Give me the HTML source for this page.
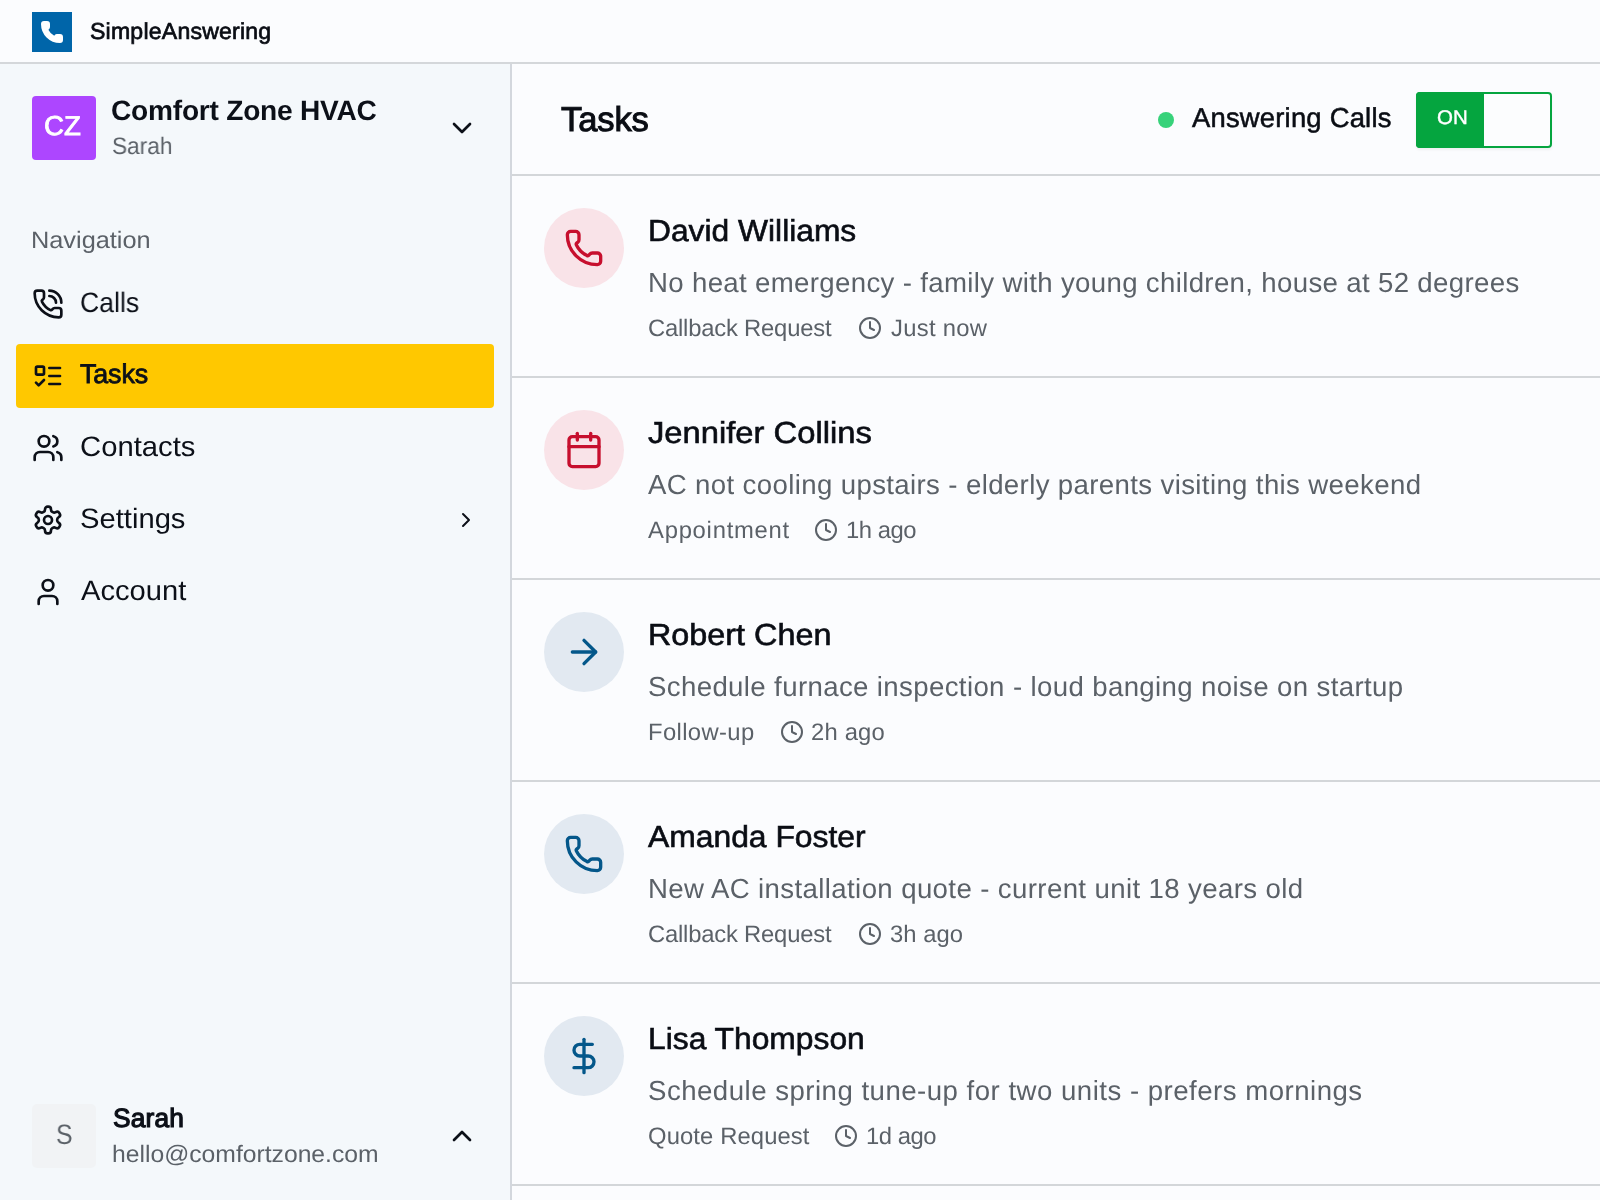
<!DOCTYPE html>
<html lang="en"><head><meta charset="utf-8"><title>Tasks - SimpleAnswering</title>
<style>
*{box-sizing:border-box;margin:0;padding:0}
html,body{width:1600px;height:1200px;overflow:hidden;background:#fbfcfe;font-family:"Liberation Sans",sans-serif;}
body{position:relative}
.t{position:absolute;white-space:nowrap;display:block;will-change:transform;text-rendering:geometricPrecision}
.i{position:absolute;display:block;overflow:visible}
.b{position:absolute;display:block}
</style></head><body>

<div class="b" id="topbar" style="left:0;top:0;width:1600px;height:64px;background:#fbfcfe;border-bottom:2px solid #d4d7da"></div>
<div class="b" id="sidebar" style="left:0;top:64px;width:512px;height:1136px;background:#f4f8fb;border-right:2px solid #d3d7dd"></div>
<div class="b" id="mainhdr" style="left:512px;top:64px;width:1088px;height:112px;background:#fbfcfe;border-bottom:2px solid #d3d6d9"></div>
<div class="b" style="left:512px;top:376px;width:1088px;height:2px;background:#d3d6d9"></div>
<div class="b" style="left:512px;top:578px;width:1088px;height:2px;background:#d3d6d9"></div>
<div class="b" style="left:512px;top:780px;width:1088px;height:2px;background:#d3d6d9"></div>
<div class="b" style="left:512px;top:982px;width:1088px;height:2px;background:#d3d6d9"></div>
<div class="b" style="left:512px;top:1184px;width:1088px;height:2px;background:#d3d6d9"></div>
<div class="b" style="left:32px;top:12px;width:40px;height:40px;background:#0065a9"></div>
<svg class="i" style="left:40px;top:20px" width="24" height="24" viewBox="0 0 24 24" stroke="#ffffff" stroke-width="2" stroke-linecap="round" stroke-linejoin="round" fill="#ffffff"><path d="M13.832 16.568a1 1 0 0 0 1.213-.303l.355-.465A2 2 0 0 1 17 15h3a2 2 0 0 1 2 2v3a2 2 0 0 1-2 2A18 18 0 0 1 2 4a2 2 0 0 1 2-2h3a2 2 0 0 1 2 2v3a2 2 0 0 1-.8 1.6l-.468.351a1 1 0 0 0-.292 1.233 14 14 0 0 0 6.392 6.384"/></svg>
<div class="b" style="left:32px;top:96px;width:64px;height:64px;background:#ad46ff;border-radius:4px"></div>
<svg class="i" style="left:446px;top:112px" width="32" height="32" viewBox="0 0 24 24" fill="none" stroke="#0c1018" stroke-width="2" stroke-linecap="round" stroke-linejoin="round" ><path d="m6 9 6 6 6-6"/></svg>
<div class="b" style="left:16px;top:344px;width:478px;height:64px;background:#ffc800;border-radius:4px"></div>
<svg class="i" style="left:32px;top:288px" width="32" height="32" viewBox="0 0 24 24" fill="none" stroke="#0c1018" stroke-width="2" stroke-linecap="round" stroke-linejoin="round" ><path d="M13 2a9 9 0 0 1 9 9"/><path d="M13 6a5 5 0 0 1 5 5"/><path d="M13.832 16.568a1 1 0 0 0 1.213-.303l.355-.465A2 2 0 0 1 17 15h3a2 2 0 0 1 2 2v3a2 2 0 0 1-2 2A18 18 0 0 1 2 4a2 2 0 0 1 2-2h3a2 2 0 0 1 2 2v3a2 2 0 0 1-.8 1.6l-.468.351a1 1 0 0 0-.292 1.233 14 14 0 0 0 6.392 6.384"/></svg>
<svg class="i" style="left:32px;top:360px" width="32" height="32" viewBox="0 0 24 24" fill="none" stroke="#0c1018" stroke-width="2" stroke-linecap="round" stroke-linejoin="round" ><rect x="3" y="5" width="6" height="6" rx="1"/><path d="m3 17 2 2 4-4"/><path d="M13 6h8"/><path d="M13 12h8"/><path d="M13 18h8"/></svg>
<svg class="i" style="left:32px;top:432px" width="32" height="32" viewBox="0 0 24 24" fill="none" stroke="#0c1018" stroke-width="2" stroke-linecap="round" stroke-linejoin="round" ><path d="M16 21v-2a4 4 0 0 0-4-4H6a4 4 0 0 0-4 4v2"/><circle cx="9" cy="7" r="4"/><path d="M22 21v-2a4 4 0 0 0-3-3.87"/><path d="M16 3.13a4 4 0 0 1 0 7.75"/></svg>
<svg class="i" style="left:32px;top:504px" width="32" height="32" viewBox="0 0 24 24" fill="none" stroke="#0c1018" stroke-width="2" stroke-linecap="round" stroke-linejoin="round" ><path d="M12.22 2h-.44a2 2 0 0 0-2 2v.18a2 2 0 0 1-1 1.73l-.43.25a2 2 0 0 1-2 0l-.15-.08a2 2 0 0 0-2.73.73l-.22.38a2 2 0 0 0 .73 2.73l.15.1a2 2 0 0 1 1 1.72v.51a2 2 0 0 1-1 1.74l-.15.09a2 2 0 0 0-.73 2.73l.22.38a2 2 0 0 0 2.73.73l.15-.08a2 2 0 0 1 2 0l.43.25a2 2 0 0 1 1 1.73V20a2 2 0 0 0 2 2h.44a2 2 0 0 0 2-2v-.18a2 2 0 0 1 1-1.73l.43-.25a2 2 0 0 1 2 0l.15.08a2 2 0 0 0 2.73-.73l.22-.39a2 2 0 0 0-.73-2.73l-.15-.08a2 2 0 0 1-1-1.74v-.5a2 2 0 0 1 1-1.74l.15-.09a2 2 0 0 0 .73-2.73l-.22-.38a2 2 0 0 0-2.73-.73l-.15.08a2 2 0 0 1-2 0l-.43-.25a2 2 0 0 1-1-1.73V4a2 2 0 0 0-2-2z"/><circle cx="12" cy="12" r="3"/></svg>
<svg class="i" style="left:32px;top:576px" width="32" height="32" viewBox="0 0 24 24" fill="none" stroke="#0c1018" stroke-width="2" stroke-linecap="round" stroke-linejoin="round" ><path d="M19 21v-2a4 4 0 0 0-4-4H9a4 4 0 0 0-4 4v2"/><circle cx="12" cy="7" r="4"/></svg>
<svg class="i" style="left:454px;top:508px" width="24" height="24" viewBox="0 0 24 24" fill="none" stroke="#0c1018" stroke-width="2" stroke-linecap="round" stroke-linejoin="round" ><path d="m9 18 6-6-6-6"/></svg>
<div class="b" style="left:32px;top:1104px;width:64px;height:64px;background:#f1f3f5;border-radius:5px"></div>
<svg class="i" style="left:446px;top:1120px" width="32" height="32" viewBox="0 0 24 24" fill="none" stroke="#0c1018" stroke-width="2" stroke-linecap="round" stroke-linejoin="round" ><path d="m18 15-6-6-6 6"/></svg>
<div class="b" style="left:1158px;top:112px;width:16px;height:16px;border-radius:50%;background:#37d27a"></div>
<div class="b" style="left:1416px;top:92px;width:136px;height:56px;border:2px solid #05a53f;border-radius:4px;background:#fcfdfe;box-shadow:0 2px 3px rgba(0,0,0,0.05)"></div>
<div class="b" style="left:1416px;top:92px;width:68px;height:56px;background:#05a53f;border-radius:4px 0 0 4px"></div>
<div class="b" style="left:544px;top:208px;width:80px;height:80px;border-radius:50%;background:#f9e3e8"></div>
<svg class="i" style="left:564px;top:228px" width="40" height="40" viewBox="0 0 24 24" fill="none" stroke="#c70f2e" stroke-width="2" stroke-linecap="round" stroke-linejoin="round" ><path d="M13.832 16.568a1 1 0 0 0 1.213-.303l.355-.465A2 2 0 0 1 17 15h3a2 2 0 0 1 2 2v3a2 2 0 0 1-2 2A18 18 0 0 1 2 4a2 2 0 0 1 2-2h3a2 2 0 0 1 2 2v3a2 2 0 0 1-.8 1.6l-.468.351a1 1 0 0 0-.292 1.233 14 14 0 0 0 6.392 6.384"/></svg>
<div class="b" style="left:544px;top:410px;width:80px;height:80px;border-radius:50%;background:#f9e3e8"></div>
<svg class="i" style="left:564px;top:430px" width="40" height="40" viewBox="0 0 24 24" fill="none" stroke="#c70f2e" stroke-width="2" stroke-linecap="round" stroke-linejoin="round" ><path d="M8 2v4"/><path d="M16 2v4"/><rect width="18" height="18" x="3" y="4" rx="2"/><path d="M3 10h18"/></svg>
<div class="b" style="left:544px;top:612px;width:80px;height:80px;border-radius:50%;background:#e2e9f1"></div>
<svg class="i" style="left:564px;top:632px" width="40" height="40" viewBox="0 0 24 24" fill="none" stroke="#04578a" stroke-width="2" stroke-linecap="round" stroke-linejoin="round" ><path d="M5 12h14"/><path d="m12 5 7 7-7 7"/></svg>
<div class="b" style="left:544px;top:814px;width:80px;height:80px;border-radius:50%;background:#e2e9f1"></div>
<svg class="i" style="left:564px;top:834px" width="40" height="40" viewBox="0 0 24 24" fill="none" stroke="#04578a" stroke-width="2" stroke-linecap="round" stroke-linejoin="round" ><path d="M13.832 16.568a1 1 0 0 0 1.213-.303l.355-.465A2 2 0 0 1 17 15h3a2 2 0 0 1 2 2v3a2 2 0 0 1-2 2A18 18 0 0 1 2 4a2 2 0 0 1 2-2h3a2 2 0 0 1 2 2v3a2 2 0 0 1-.8 1.6l-.468.351a1 1 0 0 0-.292 1.233 14 14 0 0 0 6.392 6.384"/></svg>
<div class="b" style="left:544px;top:1016px;width:80px;height:80px;border-radius:50%;background:#e2e9f1"></div>
<svg class="i" style="left:564px;top:1036px" width="40" height="40" viewBox="0 0 24 24" fill="none" stroke="#04578a" stroke-width="2" stroke-linecap="round" stroke-linejoin="round" ><line x1="12" x2="12" y1="2" y2="22"/><path d="M17 5H9.5a3.5 3.5 0 0 0 0 7h5a3.5 3.5 0 0 1 0 7H6"/></svg>
<svg class="i" style="left:857.9px;top:316.2px" width="24" height="24" viewBox="0 0 24 24" fill="none" stroke="#5b6168" stroke-width="2" stroke-linecap="round" stroke-linejoin="round" ><circle cx="12" cy="12" r="10"/><polyline points="12 6 12 12 16 14"/></svg>
<svg class="i" style="left:814.1px;top:518.2px" width="24" height="24" viewBox="0 0 24 24" fill="none" stroke="#5b6168" stroke-width="2" stroke-linecap="round" stroke-linejoin="round" ><circle cx="12" cy="12" r="10"/><polyline points="12 6 12 12 16 14"/></svg>
<svg class="i" style="left:780.1px;top:720.2px" width="24" height="24" viewBox="0 0 24 24" fill="none" stroke="#5b6168" stroke-width="2" stroke-linecap="round" stroke-linejoin="round" ><circle cx="12" cy="12" r="10"/><polyline points="12 6 12 12 16 14"/></svg>
<svg class="i" style="left:857.9px;top:922.2px" width="24" height="24" viewBox="0 0 24 24" fill="none" stroke="#5b6168" stroke-width="2" stroke-linecap="round" stroke-linejoin="round" ><circle cx="12" cy="12" r="10"/><polyline points="12 6 12 12 16 14"/></svg>
<svg class="i" style="left:834.1px;top:1124.2px" width="24" height="24" viewBox="0 0 24 24" fill="none" stroke="#5b6168" stroke-width="2" stroke-linecap="round" stroke-linejoin="round" ><circle cx="12" cy="12" r="10"/><polyline points="12 6 12 12 16 14"/></svg>
<span class="t" id="brand" style="left:89.60px;top:20.45px;font-size:23.1px;line-height:23.1px;color:#0a0d14;letter-spacing:0.200px;-webkit-text-stroke:0.69px;">SimpleAnswering</span>
<span class="t" id="org" style="left:111.40px;top:97.21px;font-size:28.1px;line-height:28.1px;color:#0c1018;letter-spacing:-0.225px;font-weight:700;">Comfort Zone HVAC</span>
<span class="t" id="orgsub" style="left:112.00px;top:134.85px;font-size:23.8px;line-height:23.8px;color:#5b6168;letter-spacing:0.000px;transform:scaleX(0.9525);transform-origin:0 0;">Sarah</span>
<span class="t" id="cz" style="left:44.40px;top:111.98px;font-size:27.2px;line-height:27.2px;color:#ffffff;letter-spacing:0.000px;-webkit-text-stroke:0.82px;transform:scaleX(1.0175);transform-origin:0 0;">CZ</span>
<span class="t" id="navlbl" style="left:31.20px;top:228.85px;font-size:23.8px;line-height:23.8px;color:#5b6168;letter-spacing:0.000px;transform:scaleX(1.0642);transform-origin:0 0;">Navigation</span>
<span class="t" id="n1" style="left:80.30px;top:289.21px;font-size:28.1px;line-height:28.1px;color:#0c1018;letter-spacing:0.000px;transform:scaleX(0.9459);transform-origin:0 0;">Calls</span>
<span class="t" id="n2" style="left:79.90px;top:361.23px;font-size:26.9px;line-height:26.9px;color:#0c1018;letter-spacing:-0.150px;-webkit-text-stroke:0.81px;">Tasks</span>
<span class="t" id="n3" style="left:80.30px;top:433.21px;font-size:28.1px;line-height:28.1px;color:#0c1018;letter-spacing:0.000px;transform:scaleX(1.0413);transform-origin:0 0;">Contacts</span>
<span class="t" id="n4" style="left:80.30px;top:505.21px;font-size:28.1px;line-height:28.1px;color:#0c1018;letter-spacing:0.000px;transform:scaleX(1.0390);transform-origin:0 0;">Settings</span>
<span class="t" id="n5" style="left:80.50px;top:577.21px;font-size:28.1px;line-height:28.1px;color:#0c1018;letter-spacing:0.000px;transform:scaleX(1.0373);transform-origin:0 0;">Account</span>
<span class="t" id="uS" style="left:55.75px;top:1121.21px;font-size:28.1px;line-height:28.1px;color:#5b6168;letter-spacing:0.000px;transform:scaleX(0.885);transform-origin:0 0;">S</span>
<span class="t" id="uname" style="left:113.00px;top:1104.74px;font-size:26.3px;line-height:26.3px;color:#0c1018;letter-spacing:0.200px;-webkit-text-stroke:1.18px;">Sarah</span>
<span class="t" id="umail" style="left:112.20px;top:1142.85px;font-size:23.8px;line-height:23.8px;color:#5b6168;letter-spacing:0.000px;transform:scaleX(1.0376);transform-origin:0 0;">hello@comfortzone.com</span>
<span class="t" id="title" style="left:560.50px;top:102.80px;font-size:34.5px;line-height:34.5px;color:#0a0d14;letter-spacing:-0.100px;-webkit-text-stroke:1.03px;">Tasks</span>
<span class="t" id="ans" style="left:1192.10px;top:103.81px;font-size:27.4px;line-height:27.4px;color:#0a0d14;letter-spacing:0.214px;-webkit-text-stroke:0.55px;">Answering Calls</span>
<span class="t" id="on" style="left:1437.30px;top:109.32px;font-size:19.7px;line-height:19.7px;color:#ffffff;letter-spacing:0.000px;-webkit-text-stroke:0.39px;transform:scaleX(1.0396);transform-origin:0 0;">ON</span>
<span class="t" id="r0n" style="left:648.00px;top:216.27px;font-size:30.4px;line-height:30.4px;color:#0a0d14;letter-spacing:0.000px;-webkit-text-stroke:0.61px;transform:scaleX(1.0452);transform-origin:0 0;">David Williams</span>
<span class="t" id="r0d" style="left:648.00px;top:268.64px;font-size:27.6px;line-height:27.6px;color:#5b6168;letter-spacing:0.348px;">No heat emergency - family with young children, house at 52 degrees</span>
<span class="t" id="r0m" style="left:648.00px;top:316.85px;font-size:23.8px;line-height:23.8px;color:#5b6168;letter-spacing:-0.200px;">Callback Request</span>
<span class="t" id="r0a" style="left:891.00px;top:316.85px;font-size:23.8px;line-height:23.8px;color:#5b6168;letter-spacing:0.286px;">Just now</span>
<span class="t" id="r1n" style="left:648.00px;top:418.27px;font-size:30.4px;line-height:30.4px;color:#0a0d14;letter-spacing:0.000px;-webkit-text-stroke:0.61px;transform:scaleX(1.0773);transform-origin:0 0;">Jennifer Collins</span>
<span class="t" id="r1d" style="left:648.00px;top:470.64px;font-size:27.6px;line-height:27.6px;color:#5b6168;letter-spacing:0.371px;">AC not cooling upstairs - elderly parents visiting this weekend</span>
<span class="t" id="r1m" style="left:648.00px;top:518.85px;font-size:23.8px;line-height:23.8px;color:#5b6168;letter-spacing:0.760px;">Appointment</span>
<span class="t" id="r1a" style="left:846.00px;top:518.85px;font-size:23.8px;line-height:23.8px;color:#5b6168;letter-spacing:-0.480px;">1h ago</span>
<span class="t" id="r2n" style="left:648.00px;top:620.27px;font-size:30.4px;line-height:30.4px;color:#0a0d14;letter-spacing:0.000px;-webkit-text-stroke:0.61px;transform:scaleX(1.0643);transform-origin:0 0;">Robert Chen</span>
<span class="t" id="r2d" style="left:648.00px;top:672.64px;font-size:27.6px;line-height:27.6px;color:#5b6168;letter-spacing:0.376px;">Schedule furnace inspection - loud banging noise on startup</span>
<span class="t" id="r2m" style="left:648.00px;top:720.85px;font-size:23.8px;line-height:23.8px;color:#5b6168;letter-spacing:0.375px;">Follow-up</span>
<span class="t" id="r2a" style="left:811.00px;top:720.85px;font-size:23.8px;line-height:23.8px;color:#5b6168;letter-spacing:0.200px;">2h ago</span>
<span class="t" id="r3n" style="left:648.00px;top:822.27px;font-size:30.4px;line-height:30.4px;color:#0a0d14;letter-spacing:0.000px;-webkit-text-stroke:0.61px;transform:scaleX(1.0476);transform-origin:0 0;">Amanda Foster</span>
<span class="t" id="r3d" style="left:648.00px;top:874.64px;font-size:27.6px;line-height:27.6px;color:#5b6168;letter-spacing:0.388px;">New AC installation quote - current unit 18 years old</span>
<span class="t" id="r3m" style="left:648.00px;top:922.85px;font-size:23.8px;line-height:23.8px;color:#5b6168;letter-spacing:-0.200px;">Callback Request</span>
<span class="t" id="r3a" style="left:889.50px;top:922.85px;font-size:23.8px;line-height:23.8px;color:#5b6168;letter-spacing:0.040px;">3h ago</span>
<span class="t" id="r4n" style="left:648.00px;top:1024.27px;font-size:30.4px;line-height:30.4px;color:#0a0d14;letter-spacing:0.000px;-webkit-text-stroke:0.61px;transform:scaleX(1.0461);transform-origin:0 0;">Lisa Thompson</span>
<span class="t" id="r4d" style="left:648.00px;top:1076.64px;font-size:27.6px;line-height:27.6px;color:#5b6168;letter-spacing:0.491px;">Schedule spring tune-up for two units - prefers mornings</span>
<span class="t" id="r4m" style="left:648.00px;top:1124.85px;font-size:23.8px;line-height:23.8px;color:#5b6168;letter-spacing:0.117px;">Quote Request</span>
<span class="t" id="r4a" style="left:866.00px;top:1124.85px;font-size:23.8px;line-height:23.8px;color:#5b6168;letter-spacing:-0.440px;">1d ago</span>
</body></html>
